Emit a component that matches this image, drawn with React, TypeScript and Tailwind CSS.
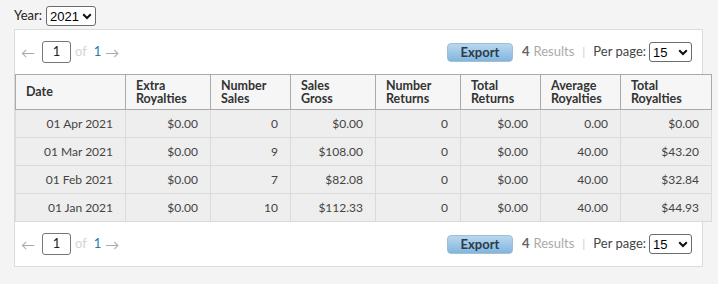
import React from "react";

const rows = [
  ["01 Apr 2021", "$0.00", "0", "$0.00", "0", "$0.00", "0.00", "$0.00"],
  ["01 Mar 2021", "$0.00", "9", "$108.00", "0", "$0.00", "40.00", "$43.20"],
  ["01 Feb 2021", "$0.00", "7", "$82.08", "0", "$0.00", "40.00", "$32.84"],
  ["01 Jan 2021", "$0.00", "10", "$112.33", "0", "$0.00", "40.00", "$44.93"],
];

const headers = [
  ["Date"],
  ["Extra", "Royalties"],
  ["Number", "Sales"],
  ["Sales", "Gross"],
  ["Number", "Returns"],
  ["Total", "Returns"],
  ["Average", "Royalties"],
  ["Total", "Royalties"],
];

const widths = ["w-[110px]", "w-[85px]", "w-[80px]", "w-[85px]", "w-[85px]", "w-[80px]", "w-[80px]", "w-[91px]"];

function Chevron() {
  return (
    <svg width="10" height="7" viewBox="0 0 10 7" className="pointer-events-none">
      <path d="M1.2 1.2 L5 5 L8.8 1.2" fill="none" stroke="#111" strokeWidth="2" />
    </svg>
  );
}

function FakeSelect({ value, className }: { value: string; className: string }) {
  return (
    <div
      className={`flex items-center justify-between rounded-[3px] border border-[#6b6b6b] bg-white pl-[3px] pr-[3px] font-['Liberation_Sans',Arial,sans-serif] text-[13px] leading-none text-black ${className}`}
    >
      <span>{value}</span>
      <Chevron />
    </div>
  );
}

function Pager() {
  return (
    <div className="flex h-[44px] items-center justify-between pl-[6px] pr-[10px]">
      <div className="flex items-center">
        <span className="text-[14px] text-[#aaa]">&larr;</span>
        <div className="ml-[7px] flex h-[22px] w-[29px] items-center justify-center rounded-[3px] border border-[#777] text-[13px] text-[#222]">
          1
        </div>
        <span className="ml-[4px] text-[13px] text-[#d4d4d4]">of</span>
        <span className="ml-[7px] text-[13px] text-[#2a7aa8]">1</span>
        <span className="ml-[4px] text-[14px] text-[#aaa]">&rarr;</span>
      </div>
      <div className="flex items-center">
        <button className="h-[19px] w-[66px] rounded-[4px] border border-[#a3bdd3] bg-gradient-to-b from-[#b8d7ef] to-[#82b6de] text-[13px] font-bold leading-none text-[#2d3a48]">
          Export
        </button>
        <span className="ml-[9px] text-[13px] font-bold text-[#666]">4</span>
        <span className="ml-[4px] text-[13px] text-[#aaa]">Results</span>
        <span className="ml-[8px] text-[12px] text-[#ccc]">|</span>
        <span className="ml-[8px] text-[13px] text-[#444]">Per page:</span>
        <FakeSelect value="15" className="ml-[3px] h-[20px] w-[43px]" />
      </div>
    </div>
  );
}

export default function App() {
  return (
    <div className="min-h-[284px] w-[718px] bg-[#f4f4f4] pl-[14px] pt-[6px] font-['Lato','Noto_Sans',sans-serif]">
      <div className="flex items-center">
        <span className="text-[13px] text-[#222]">Year:</span>
        <FakeSelect value="2021" className="ml-[4px] h-[20px] w-[50px]" />
      </div>
      <div className="mt-[3px] w-[689px] border border-[#dcdcdc] bg-white">
        <Pager />
        <table className="w-[697px] table-fixed border-collapse text-[12px]">
          <thead>
            <tr className="h-[35px] bg-[#f6f6f6]">
              {headers.map((h, i) => (
                <th
                  key={i}
                  className={`${widths[i]} border border-[#a9a9a9] px-[10px] text-left align-middle text-[12.5px] font-bold leading-[13.5px] text-[#333]`}
                >
                  {h.map((l, j) => (
                    <div key={j}>{l}</div>
                  ))}
                </th>
              ))}
            </tr>
          </thead>
          <tbody>
            {rows.map((r, i) => (
              <tr key={i} className="h-[28px] bg-[#eeeeee]">
                {r.map((c, j) => (
                  <td
                    key={j}
                    className="border-b border-r border-[#dadada] pr-[12px] text-right text-[#444] first:border-l first:border-l-[#dcdcdc] last:border-r-[#dcdcdc]"
                  >
                    {c}
                  </td>
                ))}
              </tr>
            ))}
          </tbody>
        </table>
        <Pager />
      </div>
    </div>
  );
}
